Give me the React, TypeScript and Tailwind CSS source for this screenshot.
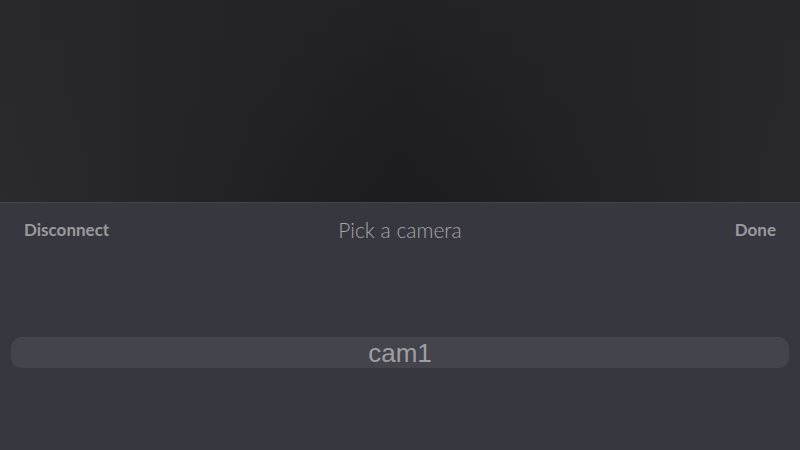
export default function App() {
  return (
    <div className="w-[800px] h-[450px] flex flex-col bg-[#37373f] overflow-hidden" style={{ fontFamily: 'Lato, "Open Sans", sans-serif' }}>
      {/* blurred camera preview */}
      <div className="h-[202px] bg-linear-to-r from-[#2a2a2f] via-[#1c1b20] to-[#28282d]">
        <div className="h-full bg-linear-to-b from-[#26252a]/60 to-transparent" />
      </div>

      {/* picker sheet */}
      <div className="flex-1 flex flex-col border-t border-[#44444b]">
        <div className="h-[54px] flex items-center justify-between px-6 relative">
          <button className="text-[17px] font-bold text-[#9a9aa0]">Disconnect</button>
          <div className="absolute left-0 right-0 text-center text-[21px] font-light text-[#a5a5ab] pointer-events-none">Pick a camera</div>
          <button className="text-[17px] font-bold text-[#9a9aa0]">Done</button>
        </div>
        <div className="flex-1 flex flex-col pt-[80px] px-[11px]">
          <div className="h-[31px] rounded-[10px] bg-[#44444c] flex items-center justify-center">
            <span className="text-[26px] text-[#9e9ea4] leading-none" style={{ fontFamily: '"Liberation Sans", Arial, sans-serif' }}>cam1</span>
          </div>
        </div>
      </div>
    </div>
  );
}
